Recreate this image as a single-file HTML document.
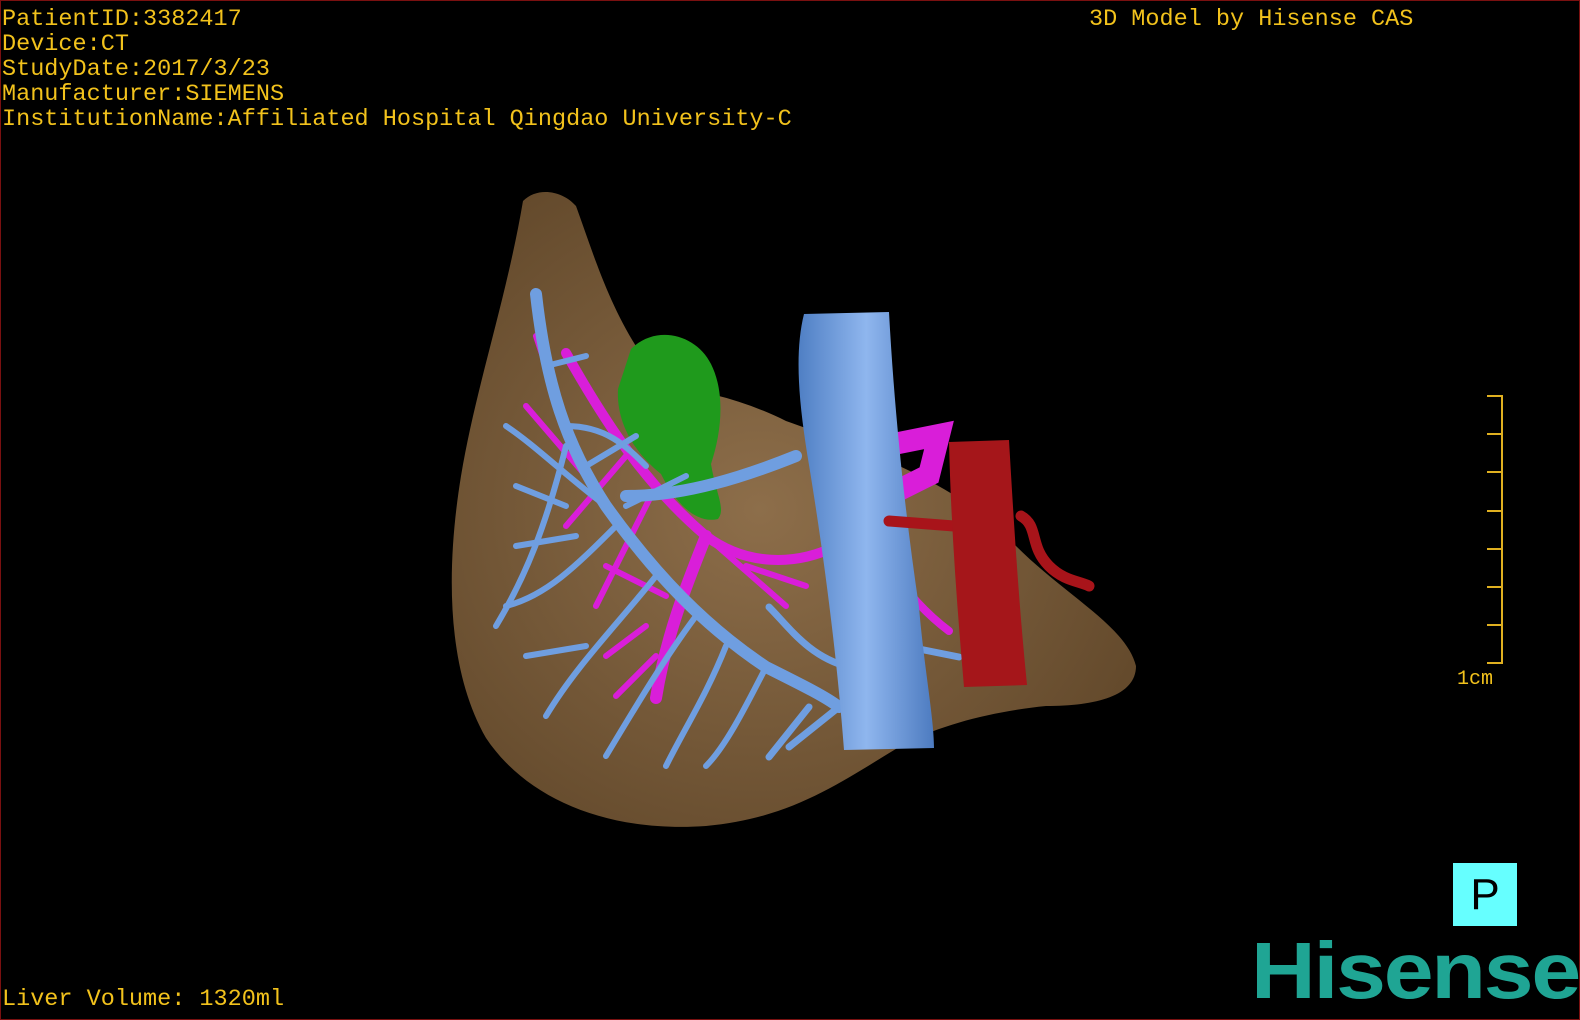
<!DOCTYPE html>
<html><head><meta charset="utf-8"><style>
html,body{margin:0;padding:0;background:#000;}
#f{position:relative;width:1580px;height:1020px;background:#000;box-sizing:border-box;border:1px solid #7a1010;overflow:hidden;font-family:"Liberation Mono",monospace;}
.t{position:absolute;left:1px;color:#f2c21c;font-size:23.5px;line-height:25px;white-space:pre;}
</style></head><body><div id="f">
<svg width="1580" height="1020" style="position:absolute;left:0;top:0">
<defs>
<radialGradient id="lv" cx="0.45" cy="0.5" r="0.6"><stop offset="0" stop-color="#8d6e4a"/><stop offset="1" stop-color="#644a2c"/></radialGradient>
<linearGradient id="ivc" x1="0" x2="1"><stop offset="0" stop-color="#4f7fc4"/><stop offset="0.5" stop-color="#8fb6ee"/><stop offset="1" stop-color="#4d7bc0"/></linearGradient>
</defs>
<path d="M522,200 C537,185 562,190 575,205 C595,260 615,330 665,385 C705,390 745,400 785,420 C855,445 965,485 1015,545 C1065,595 1125,625 1135,665 C1135,695 1095,705 1045,705 C995,710 945,722 905,742 C845,777 795,817 705,825 C605,832 525,797 485,737 C445,667 445,567 460,475 C475,385 505,300 522,200 Z" fill="url(#lv)"/>
<path d="M630,348 C655,323 695,333 710,363 C725,393 720,433 710,463 C715,493 725,508 717,518 C695,523 675,503 660,473 C635,453 615,423 617,388 Z" fill="#1f9a1c"/>
<g stroke="#d91ed9" stroke-linecap="round" fill="none">
<path d="M888,444 L938,434 L928,474 L888,494" stroke-width="22"/>
<path d="M565,352 C605,423 645,484 705,535 C745,565 795,565 835,545" stroke-width="10"/>
<path d="M705,535 C685,585 665,635 655,697" stroke-width="12"/>
<path d="M625,455 L565,525 M655,485 L595,605 M705,535 L785,605 M745,565 L805,585 M645,625 L605,655 M655,655 L615,695 M525,405 L585,475 M535,335 L565,425 M605,565 L665,595" stroke-width="6"/>
<path d="M888,565 C908,595 928,615 948,630" stroke-width="8"/>
</g>
<g stroke="#6f9ee0" stroke-linecap="round" fill="none">
<path d="M535,293 C545,383 565,444 605,505 C655,575 705,626 765,666 C805,686 825,696 838,706" stroke-width="12"/>
<path d="M605,505 C565,475 535,445 505,425 M565,445 C545,525 525,575 495,625 M615,525 C575,565 545,595 505,605 M655,575 C615,625 575,665 545,715 M695,615 C665,655 635,705 605,755 M725,645 C705,695 685,725 665,765 M765,666 C745,705 725,745 705,765 M565,425 C605,425 625,445 645,465 M585,465 L635,435 M625,505 L685,475 M545,365 L585,355 M515,485 L565,505 M515,545 L575,535 M525,655 L585,645" stroke-width="6"/>
<path d="M625,495 C685,495 745,475 795,455" stroke-width="12"/>
<path d="M848,666 C808,656 788,626 768,606 M908,646 L958,656 M838,706 L788,746 M808,706 L768,756" stroke-width="7"/>
</g>
<path d="M803,313 L888,311 C893,404 903,505 918,606 C923,666 933,717 933,747 L843,749 C836,656 823,555 808,464 C798,404 793,353 803,313 Z" fill="url(#ivc)"/>
<path d="M888,520 L953,525 M1020,515 C1038,525 1028,545 1048,565 C1063,580 1078,580 1088,585" stroke="#a8141a" stroke-width="11" stroke-linecap="round" fill="none"/>
<path d="M948,441 L1008,439 C1013,525 1018,605 1026,684 L963,686 C956,605 950,525 948,441 Z" fill="#a5161a"/>
<g stroke="#e0b020" stroke-width="2" fill="none">
<path d="M1501,394 V663 M1486,395 H1501 M1486,433 H1501 M1486,471 H1501 M1486,510 H1501 M1486,548 H1501 M1486,586 H1501 M1486,624 H1501 M1486,662 H1501"/>
</g>
</svg>
<div class="t" style="top:6px">PatientID:3382417
Device:CT
StudyDate:2017/3/23
Manufacturer:SIEMENS
InstitutionName:Affiliated Hospital Qingdao University-C</div>
<div class="t" style="top:6px;left:1088px">3D Model by Hisense CAS</div>
<div class="t" style="top:986px">Liver Volume: 1320ml</div>
<div class="t" style="top:666px;left:1456px;font-size:20px">1cm</div>
<div style="position:absolute;left:1452px;top:862px;width:64px;height:63px;background:#66ffff;color:#000;font-family:'Liberation Sans',sans-serif;font-size:44px;line-height:63px;text-align:center">P</div>
<div style="position:absolute;left:1250px;top:925px;color:#1fa594;font-family:'Liberation Sans',sans-serif;font-weight:bold;font-size:80px;line-height:90px;letter-spacing:-2px;transform:scaleX(1.12);transform-origin:left top">Hisense</div>
</div></body></html>
